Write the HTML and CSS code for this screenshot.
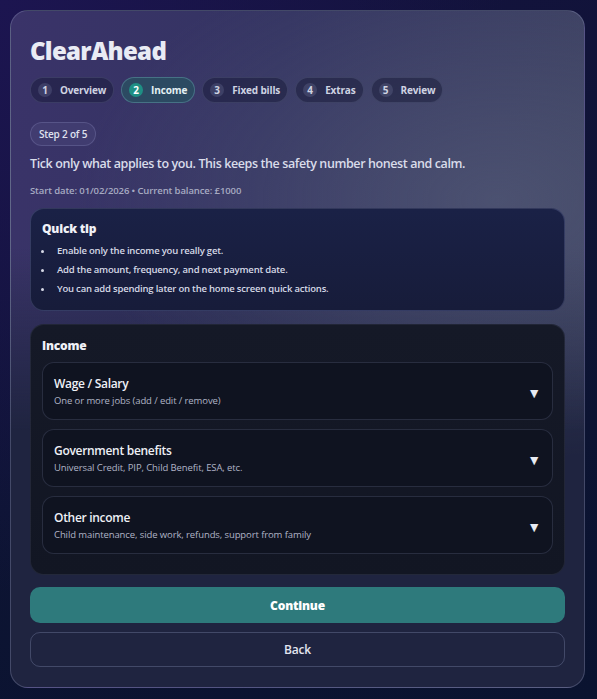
FILE: index.html
```html
<!DOCTYPE html>
<html lang="en">
<head>
<meta charset="utf-8">
<title>ClearAhead</title>
<link rel="stylesheet" href="styles.css">
</head>
<body>
<main class="card">
  <h1 class="title">ClearAhead</h1>
  <nav class="steps">
    <span class="step"><span class="num">1</span>Overview</span>
    <span class="step active"><span class="num">2</span>Income</span>
    <span class="step"><span class="num">3</span>Fixed bills</span>
    <span class="step"><span class="num">4</span>Extras</span>
    <span class="step"><span class="num">5</span>Review</span>
  </nav>
  <span class="badge">Step 2 of 5</span>
  <p class="lead">Tick only what applies to you. This keeps the safety number honest and calm.</p>
  <p class="meta">Start date: 01/02/2026 • Current balance: £1000</p>
  <section class="tip">
    <h2 class="tip-title">Quick tip</h2>
    <ul class="tip-list">
      <li>Enable only the income you really get.</li>
      <li>Add the amount, frequency, and next payment date.</li>
      <li>You can add spending later on the home screen quick actions.</li>
    </ul>
  </section>
  <section class="panel">
    <h2 class="panel-title">Income</h2>
    <div class="item">
      <div class="item-text">
        <div class="item-title">Wage / Salary</div>
        <div class="item-sub">One or more jobs (add / edit / remove)</div>
      </div>
      <span class="caret">▼</span>
    </div>
    <div class="item">
      <div class="item-text">
        <div class="item-title">Government benefits</div>
        <div class="item-sub">Universal Credit, PIP, Child Benefit, ESA, etc.</div>
      </div>
      <span class="caret">▼</span>
    </div>
    <div class="item">
      <div class="item-text">
        <div class="item-title">Other income</div>
        <div class="item-sub">Child maintenance, side work, refunds, support from family</div>
      </div>
      <span class="caret">▼</span>
    </div>
  </section>
  <button class="btn primary">Continue</button>
  <button class="btn ghost">Back</button>
</main>
</body>
</html>
```

FILE: styles.css
```css
* { box-sizing: border-box; }
html, body { height: 100%; }
body {
  margin: 0;
  padding: 10px 12px 11px 10px;
  font-family: "Open Sans", "Noto Sans", sans-serif;
  color: #e6e8f0;
  background:
    radial-gradient(ellipse at 0% 0%, #1c1550 0%, rgba(20,16,60,0) 60%),
    linear-gradient(160deg, #151240 0%, #0d1433 55%, #0a1330 100%);
}
.card {
  height: 678px;
  border-radius: 18px;
  border: 1px solid rgba(160,170,210,0.28);
  padding: 24px 19px 20px 19px;
  display: flex;
  flex-direction: column;
  background:
    radial-gradient(ellipse 420px 260px at 85% 28%, rgba(90,98,125,0.55), rgba(90,98,125,0) 100%),
    linear-gradient(180deg, rgba(0,0,0,0) 0%, rgba(0,0,0,0) 35%, #1f2440 62%, #1f2440 100%),
    linear-gradient(100deg, #3a3369 0%, #343462 40%, #3d4260 100%);
}
.title {
  margin: 0;
  font-size: 24px;
  font-weight: 800;
  line-height: 32px;
  color: #e9ebf4;
  letter-spacing: -0.7px;
}
.steps {
  display: flex;
  gap: 7px;
  margin-top: 10px;
}
.step {
  display: inline-flex;
  align-items: center;
  height: 26px;
  padding: 0 7px 0 7px;
  border-radius: 13px;
  border: 1px solid rgba(150,160,200,0.18);
  background: rgba(20,22,50,0.45);
  font-size: 10px;
  font-weight: 700;
  color: #cfd3e2;
  letter-spacing: -0.15px;
}
.num {
  display: inline-flex;
  align-items: center;
  justify-content: center;
  width: 14px;
  height: 14px;
  border-radius: 50%;
  background: rgba(120,125,160,0.28);
  margin-right: 8px;
  font-size: 10px;
  font-weight: 700;
  letter-spacing: 0;
}
.step.active {
  background: #2c4a62;
  border-color: rgba(120,190,200,0.35);
  color: #e4f0f4;
}
.step.active .num {
  background: #1f8f84;
  color: #ffffff;
}
.badge {
  align-self: flex-start;
  margin-top: 19px;
  height: 25px;
  padding: 0 8px;
  display: inline-flex;
  align-items: center;
  border-radius: 13px;
  border: 1px solid rgba(170,170,220,0.22);
  background: rgba(80,76,130,0.35);
  font-size: 10px;
  font-weight: 600;
  color: #dfe1ee;
  letter-spacing: -0.2px;
}
.lead {
  margin: 9px 0 0;
  font-size: 12.5px;
  font-weight: 600;
  line-height: 18px;
  color: #d9dcea;
  letter-spacing: -0.4px;
}
.meta {
  margin: 11px 0 0;
  font-size: 9.5px;
  font-weight: 600;
  color: #a7abc2;
  line-height: 14px;
  letter-spacing: -0.1px;
}
.tip {
  margin-top: 10px;
  border-radius: 14px;
  border: 1px solid rgba(150,160,210,0.22);
  background: linear-gradient(180deg, #1a2146 0%, #171c3a 100%);
  padding: 12px 11px 12px 11px;
  height: 103px;
}
.tip-title, .panel-title {
  margin: 0;
  font-size: 12px;
  font-weight: 800;
  line-height: 16px;
  color: #f0f1f7;
  letter-spacing: -0.2px;
}
.tip-list {
  margin: 4px 0 0;
  padding-left: 12px;
  font-size: 9.5px;
  font-weight: 600;
  color: #d6d9e6;
  line-height: 19px;
  letter-spacing: -0.2px;
}
.tip-list li { padding-left: 3px; }
.panel {
  margin-top: 13px;
  border-radius: 14px;
  border: 1px solid rgba(120,130,170,0.15);
  background: linear-gradient(180deg, #151927 0%, #121623 100%);
  padding: 13px 11px 20px 11px;
  display: flex;
  flex-direction: column;
  gap: 9px;
}
.panel-title { margin-bottom: -1px; }
.item {
  height: 58px;
  border-radius: 12px;
  border: 1px solid rgba(140,150,190,0.2);
  background: #0f1320;
  padding: 0 11px 0 11px;
  display: flex;
  align-items: center;
  justify-content: space-between;
}
.item-title {
  font-size: 12px;
  font-weight: 600;
  color: #eef0f6;
  line-height: 16px;
  letter-spacing: -0.3px;
}
.item-sub {
  margin-top: 3px;
  font-size: 9.5px;
  font-weight: 500;
  color: #b0b4c6;
  line-height: 12px;
  letter-spacing: -0.1px;
}
.caret {
  font-size: 14px;
  color: #e8eaf2;
  margin-top: 2px;
}
.btn {
  display: block;
  width: 100%;
  height: 36px;
  border-radius: 10px;
  font-family: inherit;
  font-size: 12px;
}
.primary {
  margin-top: 12px;
  border: none;
  background: #2e7a7c;
  color: #ffffff;
  font-weight: 800;
  letter-spacing: -0.2px;
}
.ghost {
  margin-top: 9px;
  height: 36px;
  border: 1px solid rgba(150,160,200,0.3);
  background: transparent;
  color: #e4e6f0;
  font-weight: 600;
  letter-spacing: -0.2px;
}
```
